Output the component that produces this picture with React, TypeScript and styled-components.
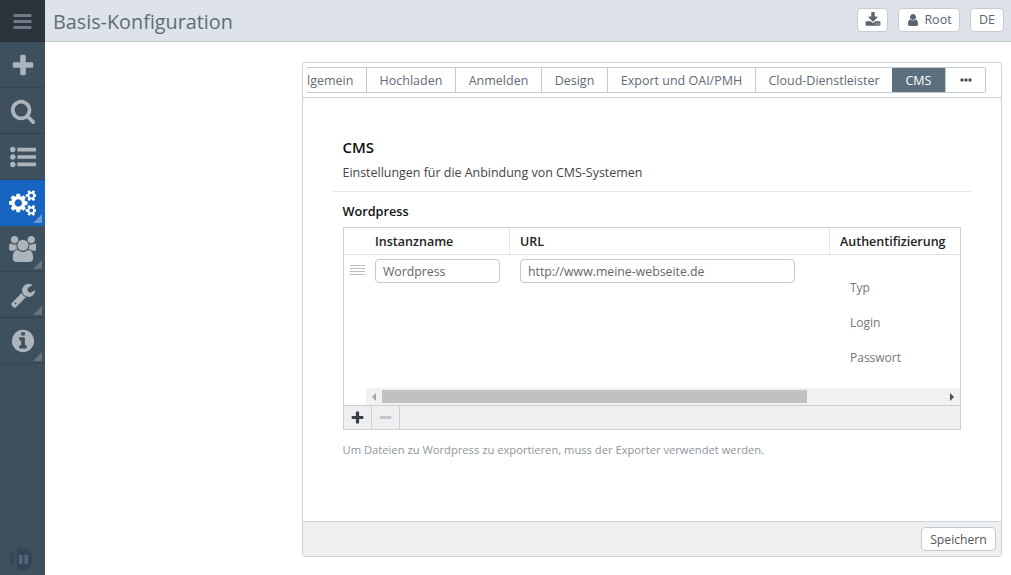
import React from "react";
import styled, { createGlobalStyle } from "styled-components";

const Global = createGlobalStyle`
  html, body { margin: 0; padding: 0; height: 100%; background: #fff; overflow: hidden; }
  body { font-family: "Open Sans", "Liberation Sans", sans-serif; font-size: 12.5px; color: #4b4f52; }
  * { box-sizing: border-box; }
`;

const paths = {
  bars: "M1664 1344v128q0 26-19 45t-45 19h-1408q-26 0-45-19t-19-45v-128q0-26 19-45t45-19h1408q26 0 45 19t19 45zm0-512v128q0 26-19 45t-45 19h-1408q-26 0-45-19t-19-45v-128q0-26 19-45t45-19h1408q26 0 45 19t19 45zm0-512v128q0 26-19 45t-45 19h-1408q-26 0-45-19t-19-45v-128q0-26 19-45t45-19h1408q26 0 45 19t19 45z",
  plus: "M1600 736v192q0 40-28 68t-68 28h-416v416q0 40-28 68t-68 28h-192q-40 0-68-28t-28-68v-416h-416q-40 0-68-28t-28-68v-192q0-40 28-68t68-28h416v-416q0-40 28-68t68-28h192q40 0 68 28t28 68v416h416q40 0 68 28t28 68z",
  minus: "M1600 736v192q0 40-28 68t-68 28h-1216q-40 0-68-28t-28-68v-192q0-40 28-68t68-28h1216q40 0 68 28t28 68z",
  search: "M1216 832q0-185-131.500-316.500t-316.500-131.500-316.500 131.500-131.500 316.500 131.500 316.500 316.500 131.500 316.500-131.500 131.500-316.500zm512 832q0 52-38 90t-90 38q-54 0-90-38l-343-342q-179 124-399 124-143 0-273.500-55.500t-225-150-150-225-55.500-273.500 55.500-273.500 150-225 225-150 273.500-55.500 273.500 55.500 225 150 150 225 55.500 273.500q0 220-124 399l343 343q37 37 37 90z",
  list: "M384 1408q0 80-56 136t-136 56-136-56-56-136 56-136 136-56 136 56 56 136zm0-512q0 80-56 136t-136 56-136-56-56-136 56-136 136-56 136 56 56 136zm1408 416v192q0 13-9.500 22.500t-22.500 9.500h-1216q-13 0-22.500-9.500t-9.500-22.500v-192q0-13 9.500-22.500t22.500-9.500h1216q13 0 22.500 9.500t9.500 22.500zm-1408-928q0 80-56 136t-136 56-136-56-56-136 56-136 136-56 136 56 56 136zm1408 416v192q0 13-9.500 22.500t-22.500 9.500h-1216q-13 0-22.500-9.500t-9.500-22.500v-192q0-13 9.500-22.500t22.500-9.500h1216q13 0 22.500 9.500t9.500 22.500zm0-512v192q0 13-9.500 22.500t-22.500 9.500h-1216q-13 0-22.500-9.500t-9.500-22.500v-192q0-13 9.500-22.500t22.500-9.500h1216q13 0 22.500 9.500t9.500 22.500z",
  cogs: "M896 896q0-106-75-181t-181-75-181 75-75 181 75 181 181 75 181-75 75-181zm768 512q0-52-38-90t-90-38-90 38-38 90q0 53 37.500 90.500t90.500 37.500 90.500-37.500 37.500-90.500zm0-1024q0-52-38-90t-90-38-90 38-38 90q0 53 37.500 90.500t90.500 37.500 90.500-37.500 37.500-90.500zm-384 421v185q0 10-7 19.500t-16 10.500l-155 24q-11 35-32 76 34 48 90 115 7 11 7 20 0 12-7 19-23 30-82.500 89.500t-78.500 59.500q-11 0-21-7l-115-90q-37 19-77 31-11 108-23 155-7 24-30 24h-186q-11 0-20-7.500t-10-17.500l-23-153q-34-10-75-31l-118 89q-7 7-20 7-11 0-21-8-144-133-144-160 0-9 7-19 10-14 41-53t47-61q-23-44-35-82l-152-24q-10-1-17-9.500t-7-19.500v-185q0-10 7-19.500t16-10.500l155-24q11-35 32-76-34-48-90-115-7-11-7-20 0-12 7-20 22-30 82-89t79-59q11 0 21 7l115 90q34-18 77-32 11-108 23-154 7-24 30-24h186q11 0 20 7.500t10 17.500l23 153q34 10 75 31l118-89q8-7 20-7 11 0 21 8 144 133 144 160 0 8-7 19-12 16-42 54t-45 60q23 48 34 82l152 23q10 2 17 10.500t7 19.500zm640 533v140q0 16-149 31-12 27-30 52 51 113 51 138 0 4-4 7-122 71-124 71-8 0-46-47t-52-68q-20 2-30 2t-30-2q-14 21-52 68t-46 47q-2 0-124-71-4-3-4-7 0-25 51-138-18-25-30-52-149-15-149-31v-140q0-16 149-31 13-29 30-52-51-113-51-138 0-4 4-7 4-2 35-20t59-34 30-16q8 0 46 46.500t52 67.500q20-2 30-2t30 2q51-71 92-112l6-2q4 0 124 70 4 3 4 7 0 25-51 138 17 23 30 52 149 15 149 31zm0-1024v140q0 16-149 31-12 27-30 52 51 113 51 138 0 4-4 7-122 71-124 71-8 0-46-47t-52-68q-20 2-30 2t-30-2q-14 21-52 68t-46 47q-2 0-124-71-4-3-4-7 0-25 51-138-18-25-30-52-149-15-149-31v-140q0-16 149-31 13-29 30-52-51-113-51-138 0-4 4-7 4-2 35-20t59-34 30-16q8 0 46 46.500t52 67.500q20-2 30-2t30 2q51-71 92-112l6-2q4 0 124 70 4 3 4 7 0 25-51 138 17 23 30 52 149 15 149 31z",
  users: "M593 896q-162 5-265 128h-134q-82 0-138-40.500t-56-118.500q0-353 124-353 6 0 43.500 21t97.500 42.500 119 21.500q67 0 133-23-5 37-5 66 0 139 81 256zm1071 637q0 120-73 189.500t-194 69.500h-874q-121 0-194-69.500t-73-189.500q0-53 3.500-103.500t14-109 26.500-108.500 43-97.500 62-81 85.500-53.500 111.500-20q10 0 43 21.500t73 48 107 48 135 21.500 135-21.500 107-48 73-48 43-21.500q61 0 111.500 20t85.500 53.500 62 81 43 97.500 26.500 108.500 14 109 3.500 103.500zm-1024-1277q0 106-75 181t-181 75-181-75-75-181 75-181 181-75 181 75 75 181zm704 384q0 159-112.500 271.500t-271.500 112.500-271.500-112.500-112.500-271.500 112.500-271.500 271.500-112.500 271.500 112.500 112.500 271.500zm576 225q0 78-56 118.500t-138 40.500h-134q-103-123-265-128 81-117 81-256 0-29-5-66 66 23 133 23 59 0 119-21.500t97.500-42.500 43.500-21q124 0 124 353zm-128-609q0 106-75 181t-181 75-181-75-75-181 75-181 181-75 181 75 75 181z",
  wrench: "M448 1472q0-26-19-45t-45-19-45 19-19 45 19 45 45 19 45-19 19-45zm644-420l-682 682q-37 37-90 37-52 0-91-37l-106-108q-38-36-38-90 0-53 38-91l681-681q39 98 114.500 173.500t173.500 114.500zm634-435q0 39-23 106-47 134-164.500 217.500t-258.500 83.500q-185 0-316.500-131.500t-131.500-316.500 131.500-316.500 316.500-131.500q58 0 121.500 16.500t107.500 46.500q16 11 16 28t-16 28l-293 169v224l193 107q5-3 79-48.500t135.500-81 70.500-35.500q15 0 23.500 10t8.500 25z",
  info: "M1152 1376v-160q0-14-9-23t-23-9h-96v-512q0-14-9-23t-23-9h-320q-14 0-23 9t-9 23v160q0 14 9 23t23 9h96v320h-96q-14 0-23 9t-9 23v160q0 14 9 23t23 9h448q14 0 23-9t9-23zm-128-896v-160q0-14-9-23t-23-9h-192q-14 0-23 9t-9 23v160q0 14 9 23t23 9h192q14 0 23-9t9-23zm640 416q0 209-103 385.500t-279.500 279.500-385.500 103-385.500-103-279.500-279.500-103-385.500 103-385.500 279.500-279.500 385.500-103 385.500 103 279.500 279.500 103 385.500z",
  download: "M1344 1344q0-26-19-45t-45-19-45 19-19 45 19 45 45 19 45-19 19-45zm256 0q0-26-19-45t-45-19-45 19-19 45 19 45 45 19 45-19 19-45zm128-224v320q0 40-28 68t-68 28h-1472q-40 0-68-28t-28-68v-320q0-40 28-68t68-28h465l135 136q58 56 136 56t136-56l136-136h464q40 0 68 28t28 68zm-325-569q17 41-14 70l-448 448q-18 19-45 19t-45-19l-448-448q-31-29-14-70 17-39 59-39h256v-448q0-26 19-45t45-19h256q26 0 45 19t19 45v448h256q42 0 59 39z",
  user: "M1536 1399q0 109-62.500 187t-150.500 78h-854q-88 0-150.500-78t-62.500-187q0-85 8.500-160.500t31.500-152 58.500-131 94-89 134.500-34.500q131 128 313 128t313-128q76 0 134.500 34.500t94 89 58.500 131 31.500 152 8.500 160.500zm-256-887q0 159-112.500 271.500t-271.500 112.500-271.500-112.500-112.500-271.500 112.500-271.500 271.500-112.500 271.500 112.500 112.500 271.500z",
  dots: "M576 736v192q0 40-28 68t-68 28h-192q-40 0-68-28t-28-68v-192q0-40 28-68t68-28h192q40 0 68 28t28 68zm512 0v192q0 40-28 68t-68 28h-192q-40 0-68-28t-28-68v-192q0-40 28-68t68-28h192q40 0 68 28t28 68zm512 0v192q0 40-28 68t-68 28h-192q-40 0-68-28t-28-68v-192q0-40 28-68t68-28h192q40 0 68 28t28 68z",
};

const Icon = ({ name, size, wide, raised }: { name: keyof typeof paths; size: number; wide?: boolean; raised?: boolean }) => (
  <svg
    width={wide ? (size * 1920) / 1792 : size}
    height={size}
    viewBox={`0 ${raised ? -64 : 0} ${wide ? 1920 : 1792} 1792`}
    fill="currentColor"
  >
    <path d={paths[name]} />
  </svg>
);

const Page = styled.div`
  display: flex;
  width: 1011px;
  height: 575px;
  overflow: hidden;
`;
const Sidebar = styled.nav`
  width: 45px;
  flex: none;
  display: flex;
  flex-direction: column;
  background: #3e4f5e;
`;
const MenuToggle = styled.div`
  height: 42px;
  flex: none;
  background: #2b343c;
  color: #6f7b84;
  display: flex;
  align-items: center;
  justify-content: center;
`;
const NavItem = styled.div<{ $active?: boolean }>`
  position: relative;
  height: 46px;
  flex: none;
  display: flex;
  align-items: center;
  justify-content: center;
  color: ${(p) => (p.$active ? "#fff" : "#adb5bc")};
  background: ${(p) => (p.$active ? "#1565c0" : "transparent")};
  border-bottom: 1px solid ${(p) => (p.$active ? "#1565c0" : "#35434f")};
`;
const Corner = styled.span<{ $active?: boolean }>`
  position: absolute;
  right: 3px;
  bottom: 2px;
  width: 0;
  height: 0;
  border-style: solid;
  border-width: 0 0 9px 9px;
  border-color: transparent transparent ${(p) => (p.$active ? "#6d9ad6" : "#67747f")} transparent;
`;
const Logo = styled.svg`
  margin: auto 0 4px 10px;
  width: 24px;
  height: 24px;
  flex: none;
`;
const Main = styled.div`
  flex: 1;
  min-width: 0;
  display: flex;
  flex-direction: column;
`;
const Header = styled.header`
  height: 42px;
  flex: none;
  display: flex;
  align-items: center;
  background: #dde3e9;
  border-bottom: 1px solid #c3c9ce;
  padding: 0 7px 2px 8px;
  gap: 10px;
`;
const Title = styled.h1`
  margin: 3px auto 0 0;
  font-size: 19.8px;
  line-height: 27px;
  font-weight: 400;
  color: #5d6d7a;
`;
const HeadButton = styled.button<{ $w: number }>`
  width: ${(p) => p.$w}px;
  height: 24px;
  padding: 0;
  display: flex;
  align-items: center;
  justify-content: center;
  gap: 4px;
  border: 1px solid #c5cbcf;
  border-radius: 4px;
  background: #fff;
  color: #5a6670;
  font: 400 12.5px "Open Sans", sans-serif;
`;
const Body = styled.main`
  flex: 1;
  padding: 20px 9px 18px 257px;
  display: flex;
  min-height: 0;
`;
const Panel = styled.section`
  flex: 1;
  min-width: 0;
  display: flex;
  flex-direction: column;
  border: 1px solid #ccd2d6;
  border-radius: 3px;
`;
const TabBar = styled.div`
  flex: none;
  height: 35px;
  padding: 4px 15px 0 4px;
  border-bottom: 1px solid #ccd2d6;
  display: flex;
`;
const TabClip = styled.div`
  overflow: hidden;
  flex: 1;
  min-width: 0;
  height: 26px;
  display: flex;
  border: 1px solid #c3cacf;
  border-left: 0;
  border-radius: 0 3px 3px 0;
`;
const Tab = styled.div<{ $active?: boolean; $first?: boolean; $last?: boolean; $w: number }>`
  flex: ${(p) => (p.$last ? "1" : "none")};
  width: ${(p) => p.$w}px;
  min-width: 0;
  margin-left: ${(p) => (p.$active ? "-1px" : "0")};
  display: flex;
  align-items: center;
  justify-content: ${(p) => (p.$first ? "flex-start" : "center")};
  font-size: 12.5px;
  color: ${(p) => (p.$active ? "#fff" : p.$last ? "#3f4a53" : "#5f6b75")};
  background: ${(p) => (p.$active ? "#5c6f7e" : "#fff")};
  border-right: ${(p) => (p.$last ? "0" : "1px solid #c3cacf")};
  white-space: nowrap;
  overflow: hidden;
`;
const Clipped = styled.span`
  margin-left: -11px;
`;
const Content = styled.div`
  flex: 1;
  padding: 40px 30px 0 30px;
  min-height: 0;
`;
const SectionTitle = styled.h2`
  margin: 0 0 0 9.5px;
  font-size: 15px;
  line-height: 19px;
  font-weight: 600;
  color: #111;
`;
const SectionText = styled.p`
  margin: 7px 0 0 9.5px;
  font-size: 12.45px;
  line-height: 18px;
  color: #444;
`;
const Divider = styled.hr`
  margin: 9px 0 0 0;
  border: 0;
  border-top: 1px solid #e4e7e9;
`;
const SubTitle = styled.h3`
  margin: 11px 0 0 9.5px;
  font-size: 12.7px;
  line-height: 17px;
  font-weight: 600;
  color: #111;
`;
const TableBox = styled.div`
  margin: 7px 10px 0 10px;
  height: 203px;
  border: 1px solid #c9d0d4;
  display: flex;
  flex-direction: column;
  overflow: hidden;
`;
const Grid = styled.div`
  flex: 1;
  display: grid;
  grid-template-columns: 31px 135px 320px 1fr;
  grid-template-rows: 27px 1fr;
`;
const HeadCell = styled.div<{ $line?: boolean }>`
  display: flex;
  align-items: center;
  font-size: 12.5px;
  font-weight: 600;
  color: #222;
  padding-left: 10px;
  white-space: nowrap;
  border-bottom: 1px solid #dfe3e6;
  border-right: ${(p) => (p.$line ? "1px solid #e3e6e8" : "0")};
`;
const HeadSpacer = styled.div`
  border-bottom: 1px solid #dfe3e6;
`;
const HeadName = styled(HeadCell)`
  padding-left: 0;
`;
const Handle = styled.div`
  margin: 10px 0 0 6px;
  width: 15px;
  height: 10px;
  display: flex;
  flex-direction: column;
  justify-content: space-between;
`;
const HandleLine = styled.span`
  display: block;
  height: 1px;
  background: #b9bfc3;
`;
const Cell = styled.div`
  padding: 4px 0 0 0;
`;
const UrlCell = styled(Cell)`
  padding-left: 10px;
`;
const Field = styled.div<{ $w: number }>`
  width: ${(p) => p.$w}px;
  height: 24px;
  border: 1px solid #c3cacf;
  border-radius: 4px;
  padding-left: 7px;
  display: flex;
  align-items: center;
  font-size: 12.3px;
  color: #666;
`;
const AuthCell = styled.div`
  padding: 24px 0 0 20px;
  display: flex;
  flex-direction: column;
  gap: 17px;
`;
const AuthLabel = styled.div`
  font-size: 12px;
  line-height: 18px;
  color: #777;
`;
const Scrollbar = styled.div`
  flex: none;
  height: 17px;
  margin-left: 22px;
  background: #f1f1f1;
  display: flex;
  align-items: center;
`;
const Arrow = styled.span<{ $right?: boolean }>`
  flex: none;
  width: 16px;
  display: flex;
  justify-content: center;
  &::before {
    content: "";
    border-style: solid;
    border-width: 4px 0 4px 0;
    border-color: transparent;
    ${(p) =>
      p.$right
        ? "border-left: 4px solid #505050; border-right: 0;"
        : "border-right: 4px solid #a3a3a3; border-left: 0;"}
  }
`;
const Thumb = styled.div`
  width: 425px;
  height: 13px;
  background: #c1c1c1;
`;
const ScrollTrack = styled.div`
  flex: 1;
`;
const TableTools = styled.div`
  flex: none;
  height: 24px;
  background: #edeff1;
  border-top: 1px solid #c9d0d4;
  display: flex;
`;
const ToolButton = styled.div<{ $off?: boolean }>`
  width: 28px;
  display: flex;
  align-items: center;
  justify-content: center;
  border-right: 1px solid #c9d0d4;
  color: ${(p) => (p.$off ? "#c4c8cb" : "#3a4045")};
`;
const Hint = styled.p`
  margin: 11px 0 0 9.5px;
  font-size: 11.2px;
  line-height: 17px;
  color: #8f969b;
`;
const Footer = styled.footer`
  flex: none;
  height: 35px;
  background: #edeff1;
  border-top: 1px solid #ccd2d6;
  display: flex;
  align-items: center;
  justify-content: flex-end;
  padding-right: 5px;
`;
const SaveButton = styled.button`
  width: 75px;
  height: 24px;
  border: 1px solid #c3cacf;
  border-radius: 4px;
  background: #fff;
  color: #555;
  padding: 0;
  font: 400 12.2px "Open Sans", sans-serif;
`;

const nav: { name: keyof typeof paths; active?: boolean; corner?: boolean; wide?: boolean; raised?: boolean }[] = [
  { name: "plus", raised: true },
  { name: "search" },
  { name: "list" },
  { name: "cogs", active: true, corner: true, wide: true },
  { name: "users", corner: true, wide: true },
  { name: "wrench", corner: true },
  { name: "info", corner: true },
];

const tabs = [
  { label: "Hochladen", w: 89 },
  { label: "Anmelden", w: 86 },
  { label: "Design", w: 66 },
  { label: "Export und OAI/PMH", w: 148 },
  { label: "Cloud-Dienstleister", w: 137 },
];

export default function App() {
  return (
    <Page>
      <Global />
      <Sidebar>
        <MenuToggle><Icon name="bars" size={21} /></MenuToggle>
        {nav.map((n) => (
          <NavItem key={n.name} $active={n.active}>
            <Icon name={n.name} size={26} wide={n.wide} raised={n.raised} />
            {n.corner && <Corner $active={n.active} />}
          </NavItem>
        ))}
        <Logo viewBox="0 0 24 24">
          <path d="M7 .5h4a11.500 11.500 0 0 1 0 23H7z" fill="#324659" />
          <path d="M3.500 3.500a11.500 11.500 0 0 0 0 17z" fill="#324659" />
          <rect x="9" y="8" width="3.500" height="9" fill="#566878" />
          <rect x="14.500" y="8" width="3.500" height="9" fill="#566878" />
        </Logo>
      </Sidebar>
      <Main>
        <Header>
          <Title>Basis-Konfiguration</Title>
          <HeadButton $w={31} aria-label="Download"><Icon name="download" size={16} /></HeadButton>
          <HeadButton $w={62}><Icon name="user" size={14} />Root</HeadButton>
          <HeadButton $w={34}>DE</HeadButton>
        </Header>
        <Body>
          <Panel>
            <TabBar>
              <TabClip>
                <Tab $first $w={60}><Clipped>Allgemein</Clipped></Tab>
                {tabs.map((t) => (
                  <Tab key={t.label} $w={t.w}>{t.label}</Tab>
                ))}
                <Tab $active $w={54}>CMS</Tab>
                <Tab $last $w={39}><Icon name="dots" size={14} raised /></Tab>
              </TabClip>
            </TabBar>
            <Content>
              <SectionTitle>CMS</SectionTitle>
              <SectionText>Einstellungen für die Anbindung von CMS-Systemen</SectionText>
              <Divider />
              <SubTitle>Wordpress</SubTitle>
              <TableBox>
                <Grid>
                  <HeadSpacer />
                  <HeadName $line>Instanzname</HeadName>
                  <HeadCell $line>URL</HeadCell>
                  <HeadCell>Authentifizierung</HeadCell>
                  <Handle>
                    <HandleLine /><HandleLine /><HandleLine /><HandleLine />
                  </Handle>
                  <Cell><Field $w={125}>Wordpress</Field></Cell>
                  <UrlCell><Field $w={275}>http://www.meine-webseite.de</Field></UrlCell>
                  <AuthCell>
                    <AuthLabel>Typ</AuthLabel>
                    <AuthLabel>Login</AuthLabel>
                    <AuthLabel>Passwort</AuthLabel>
                  </AuthCell>
                </Grid>
                <Scrollbar>
                  <Arrow />
                  <Thumb />
                  <ScrollTrack />
                  <Arrow $right />
                </Scrollbar>
                <TableTools>
                  <ToolButton><Icon name="plus" size={15} raised /></ToolButton>
                  <ToolButton $off><Icon name="minus" size={15} raised /></ToolButton>
                </TableTools>
              </TableBox>
              <Hint>Um Dateien zu Wordpress zu exportieren, muss der Exporter verwendet werden.</Hint>
            </Content>
            <Footer>
              <SaveButton>Speichern</SaveButton>
            </Footer>
          </Panel>
        </Body>
      </Main>
    </Page>
  );
}
